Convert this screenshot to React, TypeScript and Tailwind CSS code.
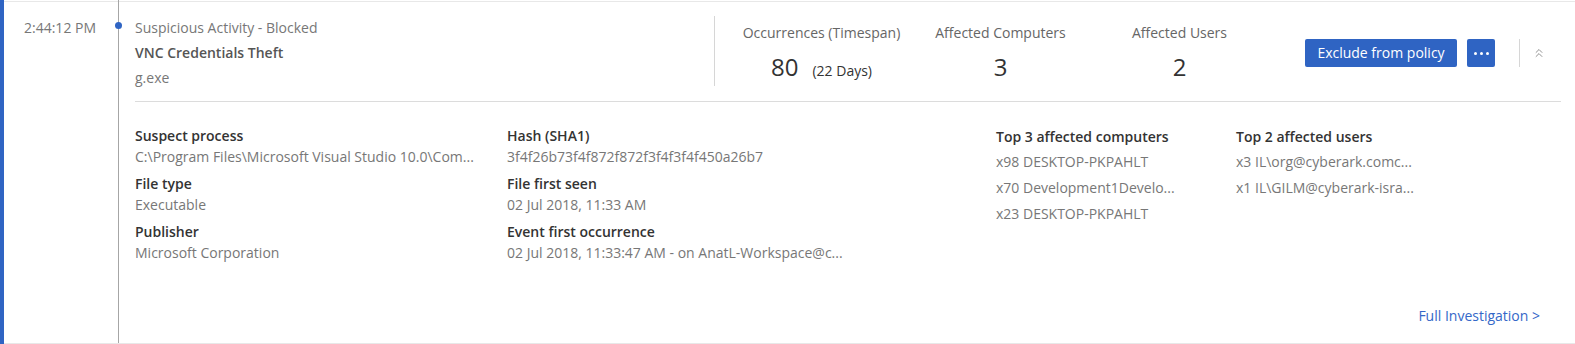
import { ChevronsUp } from 'lucide-react';

type Field = { label: string; value: string };

const colOne: Field[] = [
  { label: 'Suspect process', value: 'C:\\Program Files\\Microsoft Visual Studio 10.0\\Com...' },
  { label: 'File type', value: 'Executable' },
  { label: 'Publisher', value: 'Microsoft Corporation' },
];

const colTwo: Field[] = [
  { label: 'Hash (SHA1)', value: '3f4f26b73f4f872f872f3f4f3f4f450a26b7' },
  { label: 'File first seen', value: '02 Jul 2018, 11:33 AM' },
  { label: 'Event first occurrence', value: '02 Jul 2018, 11:33:47 AM - on AnatL-Workspace@c...' },
];

const computers = ['x98 DESKTOP-PKPAHLT', 'x70 Development1Develo...', 'x23 DESKTOP-PKPAHLT'];
const users = ['x3 IL\\org@cyberark.comc...', 'x1 IL\\GILM@cyberark-isra...'];

function FieldList({ fields }: { fields: Field[] }) {
  return (
    <div className="flex flex-col gap-[6px]">
      {fields.map((f) => (
        <div key={f.label}>
          <div className="text-[14px] leading-[21px] font-semibold text-[#333]">{f.label}</div>
          <div className="text-[14px] leading-[21px] text-[#777] whitespace-nowrap">{f.value}</div>
        </div>
      ))}
    </div>
  );
}

function TopList({ title, items }: { title: string; items: string[] }) {
  return (
    <div>
      <div className="text-[14px] leading-[24px] font-semibold text-[#333]">{title}</div>
      {items.map((i) => (
        <div key={i} className="text-[14px] leading-[26px] text-[#777] whitespace-nowrap">
          {i}
        </div>
      ))}
    </div>
  );
}

function Stat({ label, children }: { label: string; children: React.ReactNode }) {
  return (
    <div className="w-[179px] flex flex-col items-center">
      <div className="text-[14px] leading-[18px] text-[#666] mt-[22px]">{label}</div>
      <div className="mt-[10px] flex items-baseline text-[#333]">{children}</div>
    </div>
  );
}

export default function App() {
  return (
    <div className="w-[1575px] h-[344px] flex bg-white font-['Open_Sans',sans-serif]">
      <div className="w-1 bg-[#2f64c3]" />
      <div className="flex-1 flex mt-px border-t border-b border-[#e8e8e8]">
        <div className="w-[114px] pl-5 pt-[14px] text-[14px] leading-[24px] text-[#777]">2:44:12 PM</div>
        <div className="relative w-px bg-[#a6a6a6] -mt-[2px]">
          <div className="absolute left-[-3px] top-[22px] w-[7px] h-[7px] rounded-full bg-[#2f64c3]" />
        </div>
        <div className="flex-1 flex flex-col pl-4 pr-[14px]">
          <div className="h-[100px] flex border-b border-[#dcdcdc]">
            <div className="w-[579px] pt-[13px] text-[14px] leading-[25px] text-[#777]">
              <div>Suspicious Activity - Blocked</div>
              <div className="font-semibold text-[#555]">VNC Credentials Theft</div>
              <div>g.exe</div>
            </div>
            <div className="w-px bg-[#d6d6d6] mt-[14px] h-[70px]" />
            <div className="ml-[17px] flex">
              <Stat label="Occurrences (Timespan)">
                <span className="text-[24px] leading-[30px] text-[#333]">80</span>
                <span className="ml-[14px] text-[14px] text-[#333]">(22 Days)</span>
              </Stat>
              <Stat label="Affected Computers">
                <span className="text-[24px] leading-[30px]">3</span>
              </Stat>
              <Stat label="Affected Users">
                <span className="text-[24px] leading-[30px]">2</span>
              </Stat>
            </div>
            <div className="ml-[36px] mt-[37px] flex items-start">
              <button className="h-[28px] w-[152px] rounded-[2px] bg-[#2f64c3] text-white text-[14px] leading-[28px]">
                Exclude from policy
              </button>
              <button className="ml-[10px] h-[28px] w-[28px] rounded-[2px] bg-[#2f64c3] flex items-center justify-center gap-[3px]">
                <span className="w-[3px] h-[3px] rounded-full bg-white" />
                <span className="w-[3px] h-[3px] rounded-full bg-white" />
                <span className="w-[3px] h-[3px] rounded-full bg-white" />
              </button>
              <div className="ml-[24px] w-px h-[28px] bg-[#d6d6d6]" />
              <div className="ml-[12px] h-[28px] flex items-center text-[#8a8a8a]">
                <ChevronsUp size={14} strokeWidth={1.6} />
              </div>
            </div>
          </div>
          <div className="flex pt-[23px]">
            <div className="w-[372px]">
              <FieldList fields={colOne} />
            </div>
            <div className="w-[489px]">
              <FieldList fields={colTwo} />
            </div>
            <div className="w-[240px]">
              <TopList title="Top 3 affected computers" items={computers} />
            </div>
            <div>
              <TopList title="Top 2 affected users" items={users} />
            </div>
          </div>
          <div className="flex-1 flex items-end justify-end pb-[17px] pr-[21px]">
            <a className="text-[14px] leading-[20px] text-[#3467c8]">Full Investigation &gt;</a>
          </div>
        </div>
      </div>
    </div>
  );
}
